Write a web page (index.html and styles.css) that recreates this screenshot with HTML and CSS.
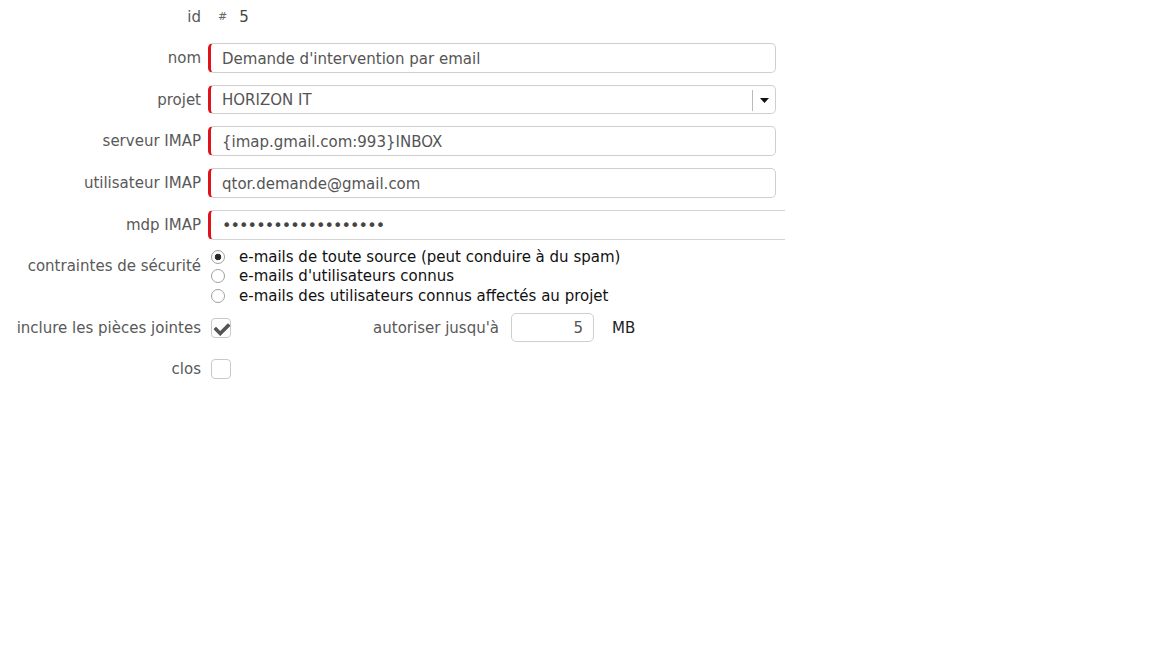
FILE: index.html
```html
<!DOCTYPE html>
<html lang="fr">
<head>
    <meta charset="UTF-8">
    <title>Boîte mail</title>
    <link rel="stylesheet" href="styles.css">
</head>
<body>
    <form class="fiche">
        <div class="ligne ligne-id">
            <label class="lib">id</label>
            <div class="champ"><span class="diese">#</span><span class="num">5</span></div>
        </div>

        <div class="ligne">
            <label class="lib">nom</label>
            <div class="champ"><input type="text" class="saisie requis" value="Demande d'intervention par email"></div>
        </div>

        <div class="ligne">
            <label class="lib">projet</label>
            <div class="champ">
                <div class="saisie requis liste">
                    <span class="liste-val">HORIZON IT</span>
                    <span class="liste-btn">
                        <svg width="9" height="5" viewBox="0 0 9 5"><path d="M0 0h9L4.5 5z" fill="#111"/></svg>
                    </span>
                </div>
            </div>
        </div>

        <div class="ligne">
            <label class="lib">serveur IMAP</label>
            <div class="champ"><input type="text" class="saisie requis" value="{imap.gmail.com:993}INBOX"></div>
        </div>

        <div class="ligne">
            <label class="lib">utilisateur IMAP</label>
            <div class="champ"><input type="text" class="saisie requis" value="qtor.demande@gmail.com"></div>
        </div>

        <div class="ligne">
            <label class="lib">mdp IMAP</label>
            <div class="champ"><input type="password" class="saisie requis mdp" value="abcdefghijklmnopqrs"></div>
        </div>

        <div class="ligne ligne-radio">
            <label class="lib">contraintes de sécurité</label>
            <div class="champ choix">
                <label class="opt"><input type="radio" name="secu" checked> e-mails de toute source (peut conduire à du spam)</label>
                <label class="opt"><input type="radio" name="secu"> e-mails d'utilisateurs connus</label>
                <label class="opt"><input type="radio" name="secu"> e-mails des utilisateurs connus affectés au projet</label>
            </div>
        </div>

        <div class="ligne ligne-pj">
            <label class="lib">inclure les pièces jointes</label>
            <div class="champ pj">
                <div class="case-cell"><input type="checkbox" class="case" checked></div>
                <label class="lib lib-taille">autoriser jusqu'à</label>
                <input type="text" class="saisie taille" value="5">
                <span class="unite">MB</span>
            </div>
        </div>

        <div class="ligne ligne-clos">
            <label class="lib">clos</label>
            <div class="champ"><input type="checkbox" class="case"></div>
        </div>
    </form>
</body>
</html>
```

FILE: styles.css
```css
body {
    margin: 0;
    background-color: #fff;
    font-family: "DejaVu Sans", Verdana, sans-serif;
    font-size: 15px;
    color: #555;
}

.fiche {
    display: flex;
    flex-direction: column;
    gap: 12px;
    width: 784px;
}

.ligne {
    display: flex;
    align-items: center;
    gap: 7px;
}

.lib {
    width: 201px;
    flex: none;
    text-align: right;
    color: #595959;
}

.champ {
    flex: 1;
    display: flex;
    align-items: center;
}

.ligne-id {
    box-sizing: border-box;
    height: 31px;
    padding-top: 2px;
}

.diese {
    font-size: 11px;
    margin-left: 10px;
    color: #666;
}

.num {
    margin-left: 12px;
    color: #444;
}

.saisie {
    box-sizing: border-box;
    height: 30px;
    width: 568px;
    margin: 0;
    padding: 1px 10px 0 11px;
    border: 1px solid #cfcfcf;
    border-radius: 5px;
    font-family: inherit;
    font-size: 15px;
    color: #555;
    background: #fff;
    outline: none;
}

.requis {
    border-left: 3px solid #e0121a;
}

.liste {
    display: flex;
    align-items: center;
    justify-content: space-between;
    padding-right: 0;
    height: 29px;
}

.liste-btn {
    display: flex;
    align-items: center;
    justify-content: center;
    width: 22px;
    height: 21px;
    border-left: 1px solid #bbb;
}

.mdp {
    width: 577px;
    border-right: none;
    border-top-right-radius: 0;
    border-bottom-right-radius: 0;
    border-top-color: #d4d4d4;
    border-bottom-color: #d4d4d4;
    height: 30px;
    font-size: 16px;
    letter-spacing: -0.9px;
    color: #444;
}

.ligne-radio {
    align-items: flex-start;
    margin-top: -5px;
}

.ligne-radio .lib {
    padding-top: 10px;
}

.choix {
    flex-direction: column;
    align-items: flex-start;
}

.opt {
    display: flex;
    align-items: center;
    height: 19.5px;
    color: #111;
    gap: 14px;
}

.opt input {
    appearance: none;
    margin: 0 0 0 3px;
    width: 14px;
    height: 14px;
    border: 1px solid #a0a0a0;
    border-radius: 50%;
    background: #fff;
    box-sizing: border-box;
}

.opt input:checked {
    background: radial-gradient(circle, #222 0, #333 3px, #fff 3.6px);
}

.ligne-pj {
    margin-top: -4px;
    height: 28px;
}

.pj {
    gap: 0;
}

.case-cell {
    width: 96px;
    display: flex;
}

.case {
    appearance: none;
    margin: 0 0 0 3px;
    width: 20px;
    height: 20px;
    box-sizing: border-box;
    border: 1px solid #c9c9c9;
    border-radius: 4px;
    background: #fff;
    position: relative;
}

.case:checked::after {
    content: "";
    position: absolute;
    left: 5px;
    top: 1px;
    width: 6px;
    height: 11px;
    border: solid #555;
    border-width: 0 4px 4px 0;
    transform: rotate(45deg);
    border-radius: 1px;
}

.lib-taille {
    width: 195px;
}

.taille {
    width: 83px;
    height: 29px;
    margin-left: 12px;
    text-align: right;
    padding-right: 10px;
}

.unite {
    margin-left: 18px;
    color: #222;
}

.ligne-clos {
    margin-top: 5px;
    height: 20px;
}
```
